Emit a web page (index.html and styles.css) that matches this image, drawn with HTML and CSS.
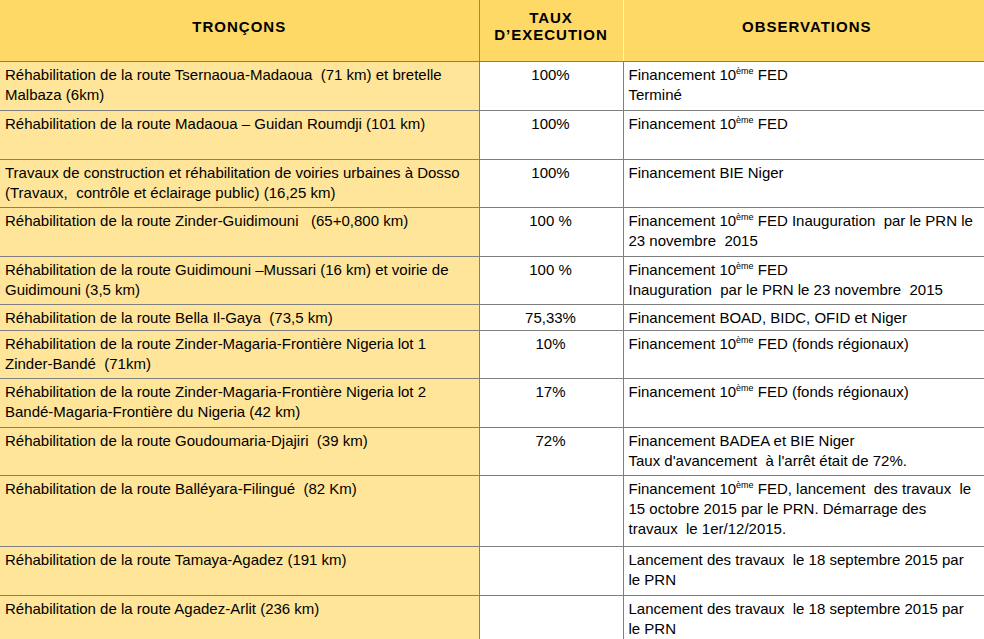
FILE: index.html
```html
<!DOCTYPE html>
<html lang="fr">
<head>
<meta charset="utf-8">
<title>Tronçons</title>
<link rel="stylesheet" href="styles.css">
</head>
<body>
<table class="grid">
  <colgroup>
    <col class="c-tr">
    <col class="c-tx">
    <col class="c-ob">
  </colgroup>
  <thead>
    <tr class="head">
      <th class="h-tr">TRONÇONS</th>
      <th class="h-tx">TAUX<br>D’EXECUTION</th>
      <th class="h-ob">OBSERVATIONS</th>
    </tr>
  </thead>
  <tbody>
    <tr class="h49">
      <td class="tr">Réhabilitation de la route Tsernaoua-Madaoua&nbsp; (71 km) et bretelle<br>Malbaza (6km)</td>
      <td class="tx">100%</td>
      <td class="ob">Financement 10<sup>ème</sup> FED<br>Terminé</td>
    </tr>
    <tr class="h49">
      <td class="tr">Réhabilitation de la route Madaoua – Guidan Roumdji (101 km)</td>
      <td class="tx">100%</td>
      <td class="ob">Financement 10<sup>ème</sup> FED</td>
    </tr>
    <tr class="h48">
      <td class="tr">Travaux de construction et réhabilitation de voiries urbaines à Dosso<br>(Travaux,&nbsp; contrôle et éclairage public) (16,25 km)</td>
      <td class="tx">100%</td>
      <td class="ob">Financement BIE Niger</td>
    </tr>
    <tr class="h49">
      <td class="tr">Réhabilitation de la route Zinder-Guidimouni&nbsp;&nbsp; (65+0,800 km)</td>
      <td class="tx">100 %</td>
      <td class="ob">Financement 10<sup>ème</sup> FED Inauguration&nbsp; par le PRN le<br>23 novembre&nbsp; 2015</td>
    </tr>
    <tr class="h48">
      <td class="tr">Réhabilitation de la route Guidimouni –Mussari (16 km) et voirie de<br>Guidimouni (3,5 km)</td>
      <td class="tx">100 %</td>
      <td class="ob">Financement 10<sup>ème</sup> FED<br>Inauguration&nbsp; par le PRN le 23 novembre&nbsp; 2015</td>
    </tr>
    <tr class="h26">
      <td class="tr">Réhabilitation de la route Bella Il-Gaya&nbsp; (73,5 km)</td>
      <td class="tx">75,33%</td>
      <td class="ob">Financement BOAD, BIDC, OFID et Niger</td>
    </tr>
    <tr class="h48">
      <td class="tr">Réhabilitation de la route Zinder-Magaria-Frontière Nigeria lot 1<br>Zinder-Bandé&nbsp; (71km)</td>
      <td class="tx">10%</td>
      <td class="ob">Financement 10<sup>ème</sup> FED (fonds régionaux)</td>
    </tr>
    <tr class="h49">
      <td class="tr">Réhabilitation de la route Zinder-Magaria-Frontière Nigeria lot 2<br>Bandé-Magaria-Frontière du Nigeria (42 km)</td>
      <td class="tx">17%</td>
      <td class="ob">Financement 10<sup>ème</sup> FED (fonds régionaux)</td>
    </tr>
    <tr class="h48">
      <td class="tr">Réhabilitation de la route Goudoumaria-Djajiri&nbsp; (39 km)</td>
      <td class="tx">72%</td>
      <td class="ob">Financement BADEA et BIE Niger<br>Taux d'avancement&nbsp; à l'arrêt était de 72%.</td>
    </tr>
    <tr class="h71">
      <td class="tr">Réhabilitation de la route Balléyara-Filingué&nbsp; (82 Km)</td>
      <td class="tx"></td>
      <td class="ob">Financement 10<sup>ème</sup> FED, lancement&nbsp; des travaux&nbsp; le<br>15 octobre 2015 par le PRN. Démarrage des<br>travaux&nbsp; le 1er/12/2015.</td>
    </tr>
    <tr class="h49">
      <td class="tr">Réhabilitation de la route Tamaya-Agadez (191 km)</td>
      <td class="tx"></td>
      <td class="ob">Lancement des travaux&nbsp; le 18 septembre 2015 par<br>le PRN</td>
    </tr>
    <tr class="h49">
      <td class="tr">Réhabilitation de la route Agadez-Arlit (236 km)</td>
      <td class="tx"></td>
      <td class="ob">Lancement des travaux&nbsp; le 18 septembre 2015 par<br>le PRN</td>
    </tr>
  </tbody>
</table>
</body>
</html>
```

FILE: styles.css
```css
html, body {
  margin: 0;
  padding: 0;
  background: #ffffff;
  overflow: hidden;
}

body {
  font-family: "Liberation Sans", Arial, sans-serif;
  font-size: 15px;
  color: #000000;
}

.grid {
  border-collapse: collapse;
  table-layout: fixed;
  width: 990px;
}

.c-tr { width: 479px; }
.c-tx { width: 144px; }
.c-ob { width: 367px; }

.head {
  height: 61px;
  background: #ffd966;
}

.head th {
  font-weight: bold;
  font-size: 15px;
  letter-spacing: 1px;
  line-height: 17px;
  text-align: center;
  vertical-align: middle;
  padding: 0 4px 8px;
  border-bottom: 1px solid #7f7f7f;
}

.h-tr { border-right: 1px solid #8a8a7a; }
.h-tx { border-right: 1px solid #fff3cc; }

td {
  vertical-align: top;
  line-height: 20px;
  padding: 3px 6px 1px 5px;
  border-bottom: 1px solid #7f7f7f;
  white-space: nowrap;
}

.tr {
  background: #ffe599;
  border-right: 1px solid #7f7f7f;
}

.tx {
  text-align: center;
  background: #ffffff;
  border-right: 1px solid #7f7f7f;
}

.ob {
  background: #ffffff;
}

.h26 { height: 26px; }
.h48 { height: 48px; }
.h49 { height: 49px; }
.h71 { height: 71px; }

sup {
  font-size: 9px;
  line-height: 0;
  vertical-align: 6px;
}
```
